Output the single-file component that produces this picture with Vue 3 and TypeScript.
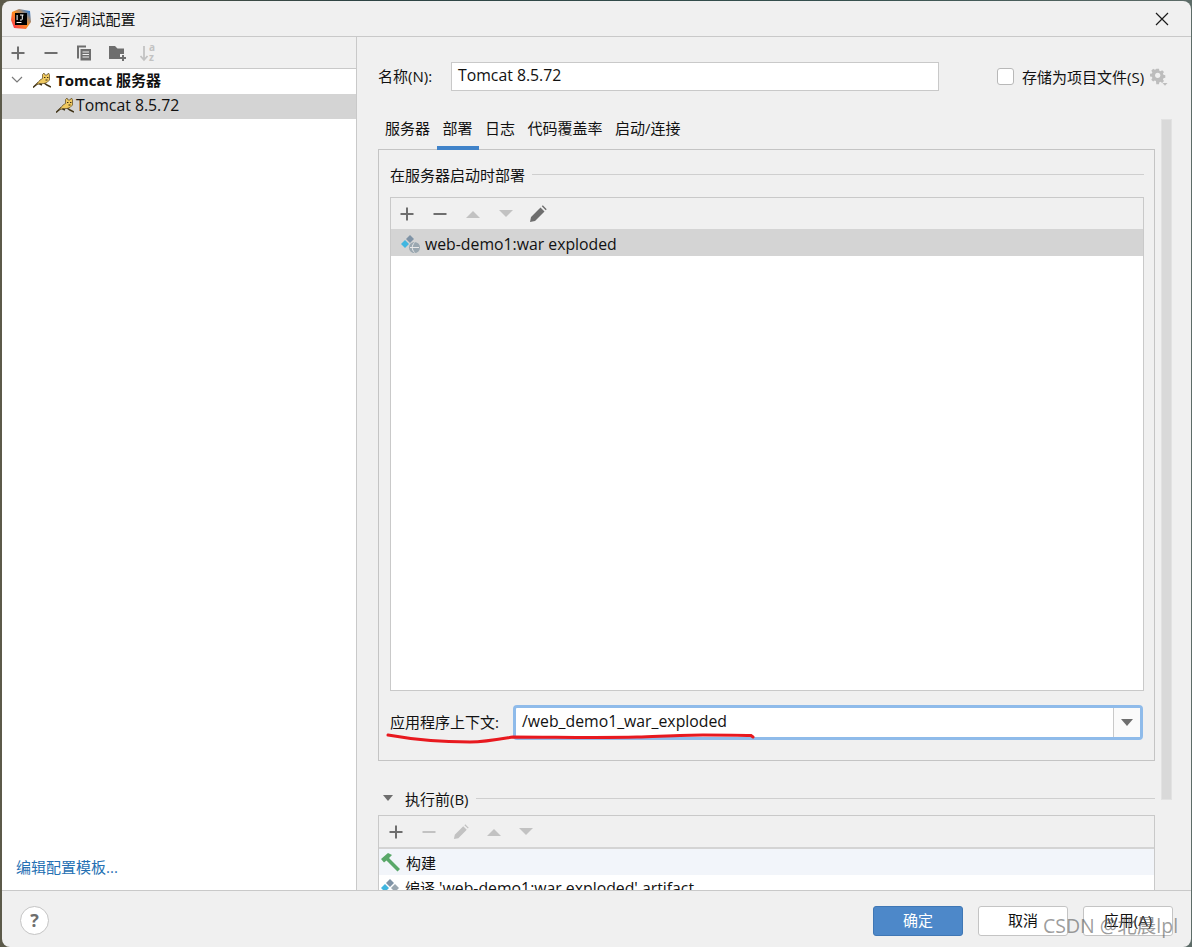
<template>
  <div class="desktop">
    <div class="dialog">
      <!-- Title bar -->
      <div class="titlebar">
        <svg class="app-logo" viewBox="0 0 20 20">
          <defs>
            <linearGradient id="logoA" x1="0" y1="1" x2="1" y2="0">
              <stop offset="0" stop-color="#fe2857" />
              <stop offset="0.5" stop-color="#fd8f1f" />
              <stop offset="1" stop-color="#087cfa" />
            </linearGradient>
          </defs>
          <path d="M1 3 L8 0 L19 2 L20 13 L15 20 L3 19 L0 11 Z" fill="url(#logoA)" />
          <rect x="4" y="4" width="12" height="12" fill="#000" />
          <rect x="5.5" y="13" width="5" height="1" fill="#fff" />
          <rect x="5.600" y="6" width="1" height="5" fill="#fff" />
          <path d="M9 6h3.500M11.300 6v4.200q0 .8-1 .8h-1.300" stroke="#fff" stroke-width="1" fill="none" />
        </svg>
        <span class="title">运行/调试配置</span>
        <svg class="close" viewBox="0 0 14 14">
          <path d="M1 1L13 13M13 1L1 13" stroke="#1a1a1a" stroke-width="1.200" fill="none" />
        </svg>
      </div>

      <div class="body">
        <!-- Left config tree -->
        <aside class="left">
          <div class="left-toolbar">
            <svg class="ico" viewBox="0 0 16 16"><path d="M8 1.500v13M1.500 8h13" class="s-dark" /></svg>
            <svg class="ico" viewBox="0 0 16 16"><path d="M1.500 8h13" class="s-dark" /></svg>
            <svg class="ico" viewBox="1 0 15 16">
              <path d="M1.500 0.500h9v2h-7v11h-2z M5 4h10.500v11.500H5z" fill="#6e6e6e" />
              <path d="M7 7h6.500M7 9.500h6.500M7 12h6.500" stroke="#f0f0f0" stroke-width="1" />
            </svg>
            <svg class="ico folder" viewBox="0 0 18 16">
              <path d="M0 1h6l2.500 2.500H15V9h-4v5H0z" fill="#6e6e6e" />
              <path d="M14 10v6M11 13h6" stroke="#6e6e6e" stroke-width="2" />
            </svg>
            <svg class="ico sort" viewBox="0 0 18 20">
              <path d="M5 3v14M1.500 13L5 17l3.500-4" stroke="#c2c2c2" stroke-width="1.800" fill="none" />
              <text x="10" y="8" class="az">a</text>
              <text x="10" y="18" class="az">z</text>
            </svg>
          </div>
          <div class="tree">
            <div class="tree-row">
              <svg class="chevron" viewBox="0 0 12 8"><path d="M1 1l5 5 5-5" stroke="#7a7a7a" stroke-width="1.200" fill="none" /></svg>
              <svg class="cat" viewBox="0 0 18 16">
                <path d="M0 15.500L5 11L9 13M11 11L14 13L18 15" stroke="#3f3216" stroke-width="1.500" fill="none" />
                <path d="M3 13L7 8L9.500 6.500V2.500L11 1L12 3H14L15.500 1L16.500 3V8L14 10.500L11 11.500L7 11.500Z" fill="#efc95f" stroke="#5a4620" stroke-width="0.700" />
                <path d="M11 5.500h1.400M14 5.500h1.400M12.500 8h2" stroke="#3a2a10" stroke-width="1" />
              </svg>
              <span class="tree-bold">Tomcat <span class="cjk">服务器</span></span>
            </div>
            <div class="tree-row selected">
              <svg class="cat child" viewBox="0 0 18 16">
                <path d="M0 15.500L5 11L9 13M11 11L14 13L18 15" stroke="#3f3216" stroke-width="1.500" fill="none" />
                <path d="M3 13L7 8L9.500 6.500V2.500L11 1L12 3H14L15.500 1L16.500 3V8L14 10.500L11 11.500L7 11.500Z" fill="#efc95f" stroke="#5a4620" stroke-width="0.700" />
                <path d="M11 5.500h1.400M14 5.500h1.400M12.500 8h2" stroke="#3a2a10" stroke-width="1" />
              </svg>
              <span>Tomcat 8.5.72</span>
            </div>
            <a class="template-link">编辑配置模板...</a>
          </div>
        </aside>

        <!-- Right settings -->
        <section class="right">
          <div class="name-row">
            <label class="name-label">名称(N):</label>
            <div class="name-input">Tomcat 8.5.72</div>
            <span class="checkbox"></span>
            <span class="check-label">存储为项目文件(S)</span>
            <svg class="gear" viewBox="0 0 18 18">
              <path d="M7.400 1h3.200l.4 2.200 1.400.6 1.900-1.300 2.200 2.200-1.300 1.900.6 1.400 2.200.4v3.200l-2.200.4-.6 1.400 1.300 1.900-2.200 2.200-1.900-1.300-1.400.6-.4 2.200H7.400L7 15.200l-1.400-.6-1.900 1.300-2.200-2.200 1.300-1.900-.6-1.400L0 10V6.800l2.200-.4.6-1.400-1.300-1.900 2.200-2.200 1.900 1.300L7 1.600z" transform="scale(.85)" fill="#bdbdbd" />
              <circle cx="7.700" cy="7.300" r="2.600" fill="#f0f0f0" />
              <path d="M12.500 15h5l-2.500 2.800z" fill="#bdbdbd" />
            </svg>
          </div>

          <div class="scroll-wrap">
            <div class="scroll-content">
              <div class="tabs">
                <span v-for="tab in tabs" :key="tab" class="tab" :class="{ active: tab === '部署' }">{{ tab }}</span>
              </div>

              <div class="panel">
                <div class="group-title">
                  <span>在服务器启动时部署</span>
                  <i class="rule"></i>
                </div>
                <div class="list">
                  <div class="list-toolbar">
                    <svg class="ico" viewBox="0 0 16 16"><path d="M8 1.500v13M1.500 8h13" class="s-dark" /></svg>
                    <svg class="ico" viewBox="0 0 16 16"><path d="M1.500 8h13" class="s-dark" /></svg>
                    <svg class="ico" viewBox="0 0 16 16"><path d="M1 12L8 5l7 7z" fill="#c2c2c2" /></svg>
                    <svg class="ico" viewBox="0 0 16 16"><path d="M1 4l7 7 7-7z" fill="#c2c2c2" /></svg>
                    <svg class="ico pencil" viewBox="0 0 18 18"><path d="M1 17l1-5L11.500 2.500l4 4L6 16z M12.800 1.300l1-1 3.900 3.900-1 1z" fill="#6e6e6e" /></svg>
                  </div>
                  <div class="list-row">
                    <svg class="artifact" viewBox="0 0 20 20">
                      <path d="M9 1l4 4-4 4-4-4z" fill="#7f93a6" />
                      <path d="M4 6l4 4-4 4-4-4z" fill="#40b6e0" />
                      <circle cx="13.500" cy="13.500" r="5.500" fill="#9aa7b0" />
                      <path d="M9 13.500h9M13.500 8.500c-3 3-3 7 0 10" stroke="#e8e8e8" stroke-width="1" fill="none" />
                    </svg>
                    <span>web-demo1:war exploded</span>
                  </div>
                </div>
                <div class="context-row">
                  <span class="context-label">应用程序上下文:</span>
                  <div class="combo">
                    <span class="combo-text">/web_demo1_war_exploded</span>
                    <span class="combo-btn"><i class="tri"></i></span>
                  </div>
                </div>
              </div>

              <div class="before-title">
                <i class="tri before-tri"></i>
                <span>执行前(B)</span>
                <i class="rule"></i>
              </div>
              <div class="before-list">
                <div class="list-toolbar before-toolbar">
                  <svg class="ico" viewBox="0 0 16 16"><path d="M8 1.500v13M1.500 8h13" class="s-dark" /></svg>
                  <svg class="ico" viewBox="0 0 16 16"><path d="M1.500 8h13" stroke="#c2c2c2" stroke-width="2" /></svg>
                  <svg class="ico" viewBox="0 0 18 18"><path d="M1 17l1-5L11.500 2.500l4 4L6 16z M12.800 1.300l1-1 3.900 3.900-1 1z" fill="#c2c2c2" /></svg>
                  <svg class="ico" viewBox="0 0 16 16"><path d="M1 12L8 5l7 7z" fill="#c2c2c2" /></svg>
                  <svg class="ico" viewBox="0 0 16 16"><path d="M1 4l7 7 7-7z" fill="#c2c2c2" /></svg>
                </div>
                <div class="before-row first">
                  <svg class="hammer" viewBox="0 0 20 20">
                    <path d="M0 7L7 1l4 2-3 3 11 11-2.500 2.500L5.500 8.500 3 10.500z" fill="#59a869" />
                  </svg>
                  <span class="cjk">构建</span>
                </div>
                <div class="before-row">
                  <svg class="artifact" viewBox="0 0 20 20">
                    <path d="M9 1l4 4-4 4-4-4z" fill="#7f93a6" />
                    <path d="M4 6l4 4-4 4-4-4z" fill="#40b6e0" />
                    <path d="M14 6l4 4-4 4-4-4z" fill="#9aa7b0" />
                  </svg>
                  <span><span class="cjk">编译</span> 'web-demo1:war exploded' artifact</span>
                </div>
              </div>
            </div>
            <div class="scrollbar"></div>
          </div>

          <!-- Hand drawn red underline on the screenshot -->
          <svg class="scribble" viewBox="0 0 372 14">
            <path d="M2 3C30 8 60 10 84 10C100 10 115 7 127 5C170 5 210 6 251 5C280 4 300 3 317 3C335 3 350 3 365 3.500L367 5" stroke="#e8191f" stroke-width="3" fill="none" stroke-linecap="round" />
          </svg>
        </section>
      </div>

      <!-- Footer -->
      <div class="footer">
        <span class="help">?</span>
        <div class="buttons">
          <button class="btn primary">确定</button>
          <button class="btn">取消</button>
          <button class="btn">应用(A)</button>
        </div>
      </div>
    </div>
    <span class="watermark">CSDN @北晨lpl</span>
  </div>
</template>

<script setup lang="ts">
const tabs: string[] = ['服务器', '部署', '日志', '代码覆盖率', '启动/连接']
</script>

<style>
html,
body {
  margin: 0;
  background: #2b3a3a;
}
</style>

<style scoped>
.desktop {
  position: relative;
  width: 1192px;
  height: 947px;
  overflow: hidden;
  background: linear-gradient(90deg, #5c5a4a, #2e4444 30%, #35504e 70%, #5d6c68);
  font-family: "Open Sans", "Noto Sans CJK SC", sans-serif;
  font-size: 15.800px;
  color: #111;
}

.cjk {
  font-size: 15px;
}

.dialog {
  box-sizing: border-box;
  width: 1189px;
  height: 946px;
  margin: 1px 1px 0 2px;
  border-radius: 8px;
  background: #f0f0f0;
  display: flex;
  flex-direction: column;
  overflow: hidden;
}

.titlebar {
  box-sizing: border-box;
  height: 36px;
  flex: none;
  display: flex;
  align-items: center;
  padding: 0 22px 0 9px;
  border-bottom: 1px solid #c9c9c9;
}

.app-logo {
  width: 20px;
  height: 20px;
  margin-right: 9px;
}

.title {
  font-size: 15px;
}

.close {
  width: 14px;
  height: 14px;
  margin-left: auto;
}

.body {
  display: flex;
  height: 853px;
  flex: none;
}

.ico {
  width: 16px;
  height: 16px;
  flex: none;
}

.s-dark {
  stroke: #6e6e6e;
  stroke-width: 2;
  fill: none;
}

.az {
  font-size: 10px;
  fill: #c2c2c2;
  font-weight: 700;
}

.left {
  width: 354px;
  flex: none;
  display: flex;
  flex-direction: column;
  border-right: 1px solid #c9c9c9;
}

.left-toolbar {
  box-sizing: border-box;
  height: 32px;
  flex: none;
  display: flex;
  align-items: center;
  gap: 17px;
  padding-left: 8px;
  border-bottom: 1px solid #c9c9c9;
}

.left-toolbar .folder {
  width: 18px;
}

.left-toolbar .sort {
  width: 18px;
  height: 20px;
  margin-left: -5px;
  overflow: visible;
}

.tree {
  flex: 1;
  display: flex;
  flex-direction: column;
  background: #fff;
}

.tree-row {
  box-sizing: border-box;
  height: 25px;
  display: flex;
  align-items: center;
  padding: 0 0 3px 9px;
  white-space: nowrap;
}

.tree-row.selected {
  background: #d4d4d4;
  padding-left: 54px;
}

.chevron {
  width: 12px;
  height: 8px;
  margin-right: 10px;
}

.cat {
  width: 18px;
  height: 16px;
  margin-right: 5px;
  flex: none;
}

.cat.child {
  margin-right: 2px;
}

.tree-bold {
  font-size: 15px;
  font-weight: 700;
  padding-bottom: 2px;
}

.template-link {
  margin-top: auto;
  margin-bottom: 13px;
  margin-left: 14px;
  font-size: 15px;
  color: #2470b3;
}

.right {
  position: relative;
  flex: 1;
  min-width: 0;
  overflow: hidden;
}

.name-row {
  display: flex;
  align-items: center;
  height: 29px;
  margin: 25px 0 0 21px;
}

.name-label {
  width: 73px;
  font-size: 15px;
  padding-bottom: 2px;
}

.name-input {
  box-sizing: border-box;
  width: 488px;
  height: 29px;
  padding-left: 6px;
  line-height: 25px;
  background: #fff;
  border: 1px solid #c9c9c9;
}

.checkbox {
  box-sizing: border-box;
  width: 17px;
  height: 17px;
  margin-left: 58px;
  background: #fff;
  border: 1px solid #b8b8b8;
  border-radius: 3px;
}

.check-label {
  margin-left: 8px;
  font-size: 15px;
  white-space: nowrap;
}

.gear {
  width: 18px;
  height: 18px;
  margin-left: 6px;
}

.scroll-wrap {
  display: flex;
  gap: 6px;
  margin-top: 27px;
  padding-left: 21px;
  height: 745px;
}

.scroll-content {
  width: 777px;
  flex: none;
}

.tabs {
  display: flex;
  gap: 0.5px;
  height: 31px;
  padding-left: 1px;
}

.tab {
  box-sizing: border-box;
  height: 32px;
  padding: 0 6px;
  line-height: 20px;
  font-size: 15px;
  white-space: nowrap;
}

.tab.active {
  border-bottom: 4px solid #4083c9;
}

.panel {
  box-sizing: border-box;
  height: 612px;
  padding: 0 10px 0 11px;
  border: 1px solid #c4c4c4;
  display: flex;
  flex-direction: column;
}

.group-title {
  display: flex;
  align-items: center;
  height: 20px;
  margin-top: 14px;
  font-size: 15px;
  white-space: nowrap;
}

.rule {
  flex: 1;
  height: 1px;
  margin-left: 7px;
  background: #cfcfcf;
}

.list {
  box-sizing: border-box;
  height: 494px;
  margin-top: 13px;
  border: 1px solid #c9c9c9;
  background: #fff;
}

.list-toolbar {
  box-sizing: border-box;
  height: 33px;
  display: flex;
  align-items: center;
  gap: 17px;
  padding-left: 8px;
  background: #f0f0f0;
  border-bottom: 2px solid #d4d4d4;
}

.list-toolbar .pencil {
  width: 18px;
  height: 18px;
  margin-left: -2px;
}

.list-row {
  height: 25px;
  display: flex;
  align-items: center;
  padding-left: 10px;
  background: #d4d4d4;
  white-space: nowrap;
}

.artifact {
  width: 20px;
  height: 20px;
  margin-right: 4px;
  flex: none;
}

.context-row {
  display: flex;
  align-items: center;
  height: 35px;
  margin-top: 14px;
}

.context-label {
  width: 123px;
  flex: none;
  font-size: 15px;
  padding-bottom: 3px;
  white-space: nowrap;
}

.combo {
  box-sizing: border-box;
  width: 630px;
  height: 35px;
  display: flex;
  background: #fff;
  border: 3px solid #8fbbea;
  border-radius: 4px;
}

.combo-text {
  flex: 1;
  padding-left: 6px;
  line-height: 27px;
}

.combo-btn {
  width: 26px;
  display: flex;
  align-items: center;
  justify-content: center;
  background: #fafafa;
  border-left: 1px solid #c9c9c9;
}

.tri {
  width: 0;
  height: 0;
  border-left: 6px solid transparent;
  border-right: 6px solid transparent;
  border-top: 7px solid #6e6e6e;
}

.before-title {
  display: flex;
  align-items: center;
  height: 20px;
  margin-top: 27px;
  font-size: 15px;
  white-space: nowrap;
}

.before-tri {
  margin: 0 0 0 5px;
  border-left-width: 5px;
  border-right-width: 5px;
  border-top-width: 6px;
}

.before-title span {
  margin-left: 12px;
}

.before-list {
  box-sizing: border-box;
  height: 90px;
  margin-top: 7px;
  border: 1px solid #c9c9c9;
  border-bottom: none;
  background: #fff;
  overflow: hidden;
}

.before-toolbar {
  height: 33px;
  gap: 16.500px;
  padding-left: 9px;
}

.before-row {
  height: 26px;
  display: flex;
  align-items: center;
  padding-left: 2px;
  white-space: nowrap;
}

.before-row.first {
  background: #f2f5fa;
}

.hammer {
  width: 20px;
  height: 20px;
  margin-right: 5px;
}

.scrollbar {
  box-sizing: border-box;
  width: 11px;
  height: 681px;
  margin-top: 1px;
  background: #d9d9d9;
  border: 1px solid #e2e2e2;
}

.scribble {
  position: absolute;
  left: 29px;
  top: 695px;
  width: 372px;
  height: 14px;
  pointer-events: none;
}

.footer {
  flex: 1;
  display: flex;
  align-items: center;
  justify-content: space-between;
  padding: 3px 18px 0 18px;
  border-top: 1px solid #c9c9c9;
}

.help {
  box-sizing: border-box;
  width: 29px;
  height: 29px;
  border: 1px solid #c4c4c4;
  border-radius: 50%;
  background: #fff;
  color: #6e6e6e;
  font-size: 18px;
  font-weight: 700;
  line-height: 27px;
  text-align: center;
}

.buttons {
  display: flex;
  gap: 15px;
}

.btn {
  box-sizing: border-box;
  width: 90px;
  height: 30px;
  padding: 0 0 2px;
  background: #fff;
  border: 1px solid #c4c4c4;
  border-radius: 3px;
  font: inherit;
  font-size: 15px;
  color: #111;
}

.btn.primary {
  background: #4d88c9;
  border-color: #3f77b5;
  color: #fff;
}

.watermark {
  position: absolute;
  left: 1043px;
  top: 910px;
  font-size: 19.500px;
  color: rgba(90, 90, 90, 0.6);
  white-space: nowrap;
}
</style>
